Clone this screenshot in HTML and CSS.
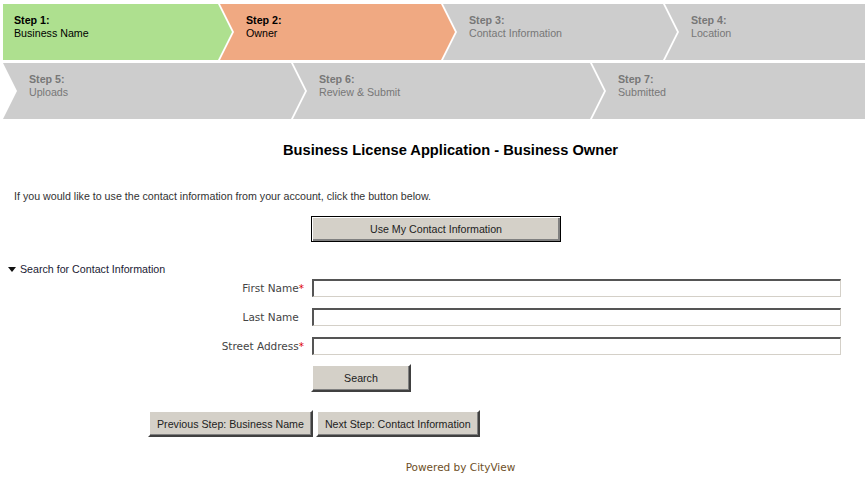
FILE: index.html
```html
<!DOCTYPE html>
<html lang="en">
<head>
    <meta charset="UTF-8">
    <title>Business License Application - Business Owner</title>
    <link rel="stylesheet" href="styles.css">
</head>
<body>

<div class="steps">
    <div class="step-row">
        <div class="step step-done step-first" style="width: 229px;">
            <b>Step 1:</b>
            <span>Business Name</span>
        </div>
        <div class="step step-current" style="width: 235px;">
            <b>Step 2:</b>
            <span>Owner</span>
        </div>
        <div class="step" style="width: 234px;">
            <b>Step 3:</b>
            <span>Contact Information</span>
        </div>
        <div class="step step-last">
            <b>Step 4:</b>
            <span>Location</span>
        </div>
    </div>
    <div class="step-row">
        <div class="step" style="width: 302px;">
            <b>Step 5:</b>
            <span>Uploads</span>
        </div>
        <div class="step" style="width: 311px;">
            <b>Step 6:</b>
            <span>Review &amp; Submit</span>
        </div>
        <div class="step step-last">
            <b>Step 7:</b>
            <span>Submitted</span>
        </div>
    </div>
</div>

<h2 class="page-title">Business License Application - Business Owner</h2>

<p class="intro">If you would like to use the contact information from your account, click the button below.</p>

<button class="btn btn-default contact-btn">Use My Contact Information</button>

<div class="section-toggle">
    <svg class="toggle-arrow" width="8" height="5" viewBox="0 0 8 5"><path d="M0 0 H8 L4 5 Z" fill="#111"/></svg>
    <span>Search for Contact Information</span>
</div>

<div class="search-form">
    <label for="firstName">First Name<span class="req">*</span></label>
    <input type="text" id="firstName" autofocus>

    <label for="lastName">Last Name<span class="req req-hidden">*</span></label>
    <input type="text" id="lastName">

    <label for="street">Street Address<span class="req">*</span></label>
    <input type="text" id="street">

    <button class="btn search-btn">Search</button>
</div>

<div class="wizard-nav">
    <button class="btn nav-btn">Previous Step: Business Name</button>
    <button class="btn nav-btn">Next Step: Contact Information</button>
</div>

<div class="powered">Powered by CityView</div>

</body>
</html>
```

FILE: styles.css
```css
body {
    margin: 0;
    font-family: "Liberation Sans", Arial, sans-serif;
    font-size: 10.67px;
    color: #222;
}

/* Wizard steps */
.steps {
    padding: 4px 0 0 3px;
}
.step-row {
    display: flex;
    height: 56px;
    margin-bottom: 3px;
}
.step {
    box-sizing: border-box;
    flex: none;
    padding: 10px 0 0 26px;
    line-height: 13px;
    background-color: #cdcdcd;
    color: #777;
    margin-left: -12px;
    clip-path: polygon(0 0, calc(100% - 14px) 0, 100% 50%, calc(100% - 14px) 100%, 0 100%, 14px 50%);
}
.step-row .step:first-child {
    margin-left: 0;
}
.step b,
.step span {
    display: block;
}
.step-first {
    padding-left: 11px;
    clip-path: polygon(0 0, calc(100% - 14px) 0, 100% 50%, calc(100% - 14px) 100%, 0 100%);
}
.step-last {
    flex: 1;
    clip-path: polygon(0 0, 100% 0, 100% 100%, 0 100%, 14px 50%);
}
.step-done {
    background-color: #aee08f;
    color: #000;
}
.step-current {
    background-color: #f0a982;
    color: #000;
}

.page-title {
    margin: 23px 0 0 36px;
    text-align: center;
    font-size: 14.67px;
    line-height: 17px;
    color: #000;
}

.intro {
    margin: 31px 0 0 14px;
    line-height: 13px;
    color: #333;
}

/* Buttons */
.btn {
    box-sizing: border-box;
    font-family: "Liberation Sans", Arial, sans-serif;
    font-size: 10.67px;
    color: #222;
    background-color: #d4d0c8;
    border: 2px solid;
    border-color: #fff #404040 #404040 #fff;
    box-shadow: inset -1px -1px 0 #808080;
    padding: 0 7px;
    cursor: pointer;
}
.btn-default {
    border: 1px solid #000;
    box-shadow: inset 1px 1px 0 #fff, inset -2px -2px 0 #808080;
}
.contact-btn {
    display: block;
    width: 250px;
    height: 26px;
    margin: 13px 0 0 311px;
}

.section-toggle {
    display: flex;
    align-items: center;
    gap: 4px;
    margin: 21px 0 0 8px;
    line-height: 13px;
    color: #1a1a33;
}

/* Search form */
.search-form {
    display: grid;
    grid-template-columns: 304px 529px;
    column-gap: 8px;
    row-gap: 11px;
    align-items: center;
    margin-top: 3px;
}
.search-form label {
    text-align: right;
    font-family: "DejaVu Sans", Verdana, sans-serif;
    font-size: 10.5px;
    color: #444;
}
.req {
    color: #d00;
}
.req-hidden {
    visibility: hidden;
}
.search-form input {
    box-sizing: border-box;
    height: 18px;
    width: 529px;
    margin: 0;
    padding: 0 2px;
    border-style: solid;
    border-width: 2px 1px 1px 2px;
    border-color: #555 #d4d0c8 #d4d0c8 #555;
    font-size: 11px;
    outline: none;
}
.search-btn {
    grid-column: 2;
    justify-self: start;
    width: 100px;
    height: 28px;
    margin: -2px 0 0 -1px;
}

.wizard-nav {
    display: flex;
    gap: 3px;
    margin-top: 18px;
    padding-left: 148px;
}
.nav-btn {
    height: 27px;
}

.powered {
    margin: 24px 0 0 56px;
    text-align: center;
    font-family: "DejaVu Sans", Verdana, sans-serif;
    font-size: 10.5px;
    line-height: 13px;
    color: #6e4f1f;
}
```
